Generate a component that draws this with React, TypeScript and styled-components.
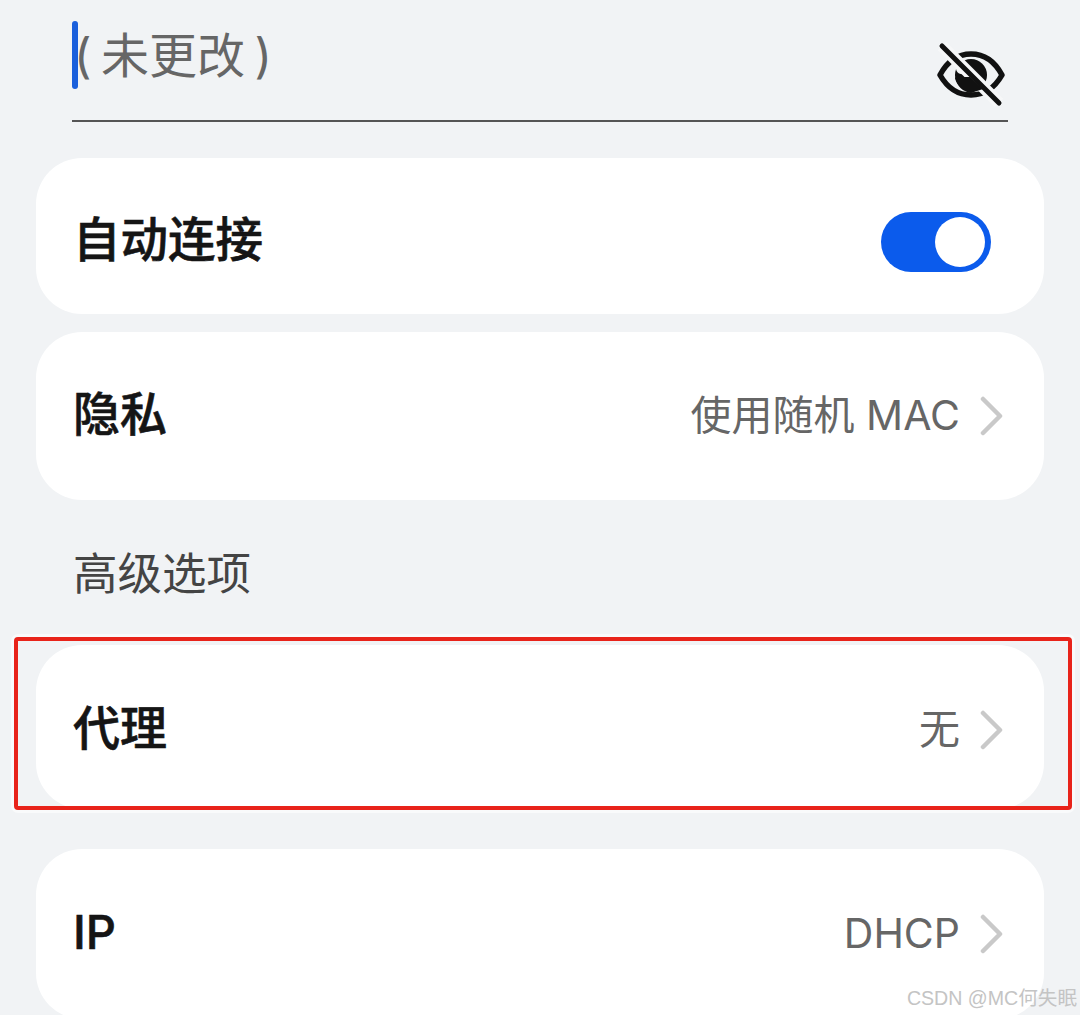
import styled, { createGlobalStyle } from 'styled-components';

const GlobalStyle = createGlobalStyle`
  html, body {
    margin: 0;
    padding: 0;
    background: #f1f3f5;
  }
  body {
    font-family: Inter, "Noto Sans CJK SC", sans-serif;
  }
`;

const Chevron = () => (
  <ChevronIcon viewBox="0 0 24 40" aria-hidden="true">
    <path d="M3 3 L20 20 L3 37" fill="none" stroke="#c9c9c9" strokeWidth="4.5" strokeLinecap="round" strokeLinejoin="round" />
  </ChevronIcon>
);

const EyeOff = () => (
  <EyeIcon viewBox="0 0 70 66" aria-hidden="true">
    <path d="M3 33 C11 18 22 12 34 12 C46 12 57 18 65 33 C57 47 46 53 34 53 C22 53 11 47 3 33 Z" fill="none" stroke="#111" strokeWidth="5.5" strokeLinejoin="round" />
    <circle cx="34" cy="33" r="16" fill="#111" />
    <path d="M5 4 L62 61" stroke="#f6f7f8" strokeWidth="12" strokeLinecap="butt" />
    <path d="M19 26 C19 31 24 34 30 31 L24 23 Z" fill="#f6f7f8" />
    <path d="M19 35 L33 35 L46 47 L34 51 C26 50 20 44 18 36 Z" fill="#111" />
    <path d="M5 4 L62 61" stroke="#111" strokeWidth="5" strokeLinecap="round" />
  </EyeIcon>
);

const App = () => {
  return (
    <Page>
      <GlobalStyle />
      <PasswordRow>
        <Caret />
        <Placeholder>( 未更改 )</Placeholder>
        <EyeOff />
      </PasswordRow>

      <Card $height={156} $top={36}>
        <Label>自动连接</Label>
        <Switch>
          <Knob />
        </Switch>
      </Card>

      <Card $height={168} $top={18}>
        <ShortLabel>隐私</ShortLabel>
        <Value>
          <ValueText>使用随机 MAC</ValueText>
          <Chevron />
        </Value>
      </Card>

      <SectionTitle>高级选项</SectionTitle>

      <Card $height={164} $top={0} $nudge={6}>
        <ShortLabel>代理</ShortLabel>
        <Value>
          <ValueText>无</ValueText>
          <Chevron />
        </Value>
        <Highlight />
      </Card>

      <Card $height={170} $top={40}>
        <ShortLabel>IP</ShortLabel>
        <Value>
          <ValueText>DHCP</ValueText>
          <Chevron />
        </Value>
      </Card>

      <Watermark>CSDN @MC何失眠</Watermark>
    </Page>
  );
};

const Page = styled.div`
  position: relative;
  width: 1080px;
  height: 1015px;
  padding: 0 36px;
  box-sizing: border-box;
  overflow: hidden;
  background: #f1f3f5;
`;

const PasswordRow = styled.div`
  position: relative;
  display: flex;
  align-items: flex-start;
  height: 120px;
  margin: 0 36px;
  border-bottom: 2px solid #555;
`;

const Caret = styled.div`
  width: 6px;
  height: 68px;
  margin-top: 21px;
  border-radius: 3px;
  background: #1a5fdc;
`;

const Placeholder = styled.span`
  margin-left: -6px;
  padding-left: 2px;
  font-size: 48px;
  line-height: 68px;
  margin-top: 22px;
  word-spacing: -4px;
  color: #666;
`;

const EyeIcon = styled.svg`
  width: 70px;
  height: 66px;
  margin-left: auto;
  margin-top: 42px;
  margin-right: 1px;
`;

const Card = styled.div<{ $height: number; $top: number; $nudge?: number }>`
  position: relative;
  display: flex;
  align-items: center;
  justify-content: space-between;
  height: ${(p) => p.$height}px;
  margin-top: ${(p) => p.$top}px;
  padding: ${(p) => p.$nudge ?? 0}px 40px 0 37px;
  box-sizing: border-box;
  border-radius: 46px;
  background: #fff;
`;

const Label = styled.span`
  font-size: 47.5px;
  line-height: 60px;
  font-weight: 500;
  -webkit-text-stroke: 0.6px #151515;
  color: #151515;
  margin-top: 8px;
`;

const ShortLabel = styled.span`
  font-size: 47px;
  line-height: 60px;
  font-weight: 500;
  -webkit-text-stroke: 0.6px #151515;
  color: #151515;
  margin-bottom: 4px;
`;

const Value = styled.span`
  display: flex;
  align-items: center;
  gap: 20px;
  color: #666;
`;

const ValueText = styled.span`
  font-size: 41px;
  line-height: 56px;
  margin-bottom: 3px;
`;

const ChevronIcon = styled.svg`
  width: 24px;
  height: 40px;
`;

const Switch = styled.div`
  display: flex;
  align-items: center;
  justify-content: flex-end;
  width: 110px;
  height: 60px;
  margin: 12px 13px 0 0;
  padding-right: 6px;
  box-sizing: border-box;
  border-radius: 30px;
  background: #0b5bec;
`;

const Knob = styled.div`
  width: 50px;
  height: 50px;
  border-radius: 50%;
  background: #fff;
`;

const SectionTitle = styled.div`
  height: 145px;
  padding: 46px 0 0 37px;
  box-sizing: border-box;
  font-size: 44.5px;
  line-height: 56px;
  color: #444;
`;

const Highlight = styled.div`
  position: absolute;
  left: -22px;
  right: -28px;
  top: -8px;
  bottom: -1px;
  border: 4px solid #e8231a;
  border-radius: 4px;
  box-shadow: 0 0 0 3px rgba(255, 255, 255, 0.55);
  pointer-events: none;
`;

const Watermark = styled.div`
  position: absolute;
  right: 3px;
  bottom: 5px;
  font-family: "Liberation Sans", "Noto Sans CJK SC", sans-serif;
  font-size: 19.6px;
  line-height: 24px;
  color: #c4c4c4;
`;

export default App;
